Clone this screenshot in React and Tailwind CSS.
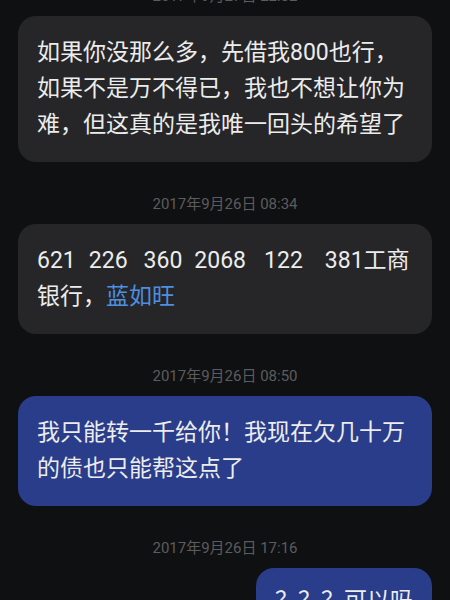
import React from 'react';

const font = { fontFamily: 'Roboto, "Noto Sans CJK SC", sans-serif' };

const Stamp = ({ children, first }) => (
  <div
    className={`h-[20px] text-center text-[15px] leading-[20px] text-[#5c5c5e] ${first ? '' : 'mt-[32px]'}`}
  >
    {children}
  </div>
);

const Bubble = ({ children, mine, className = '' }) => (
  <div
    className={`mt-[10px] rounded-[18px] px-[19px] py-[19px] text-[23px] leading-[36px] text-[#ececec] ${
      mine ? 'bg-[#293d8a]' : 'bg-[#262628]'
    } ${className}`}
  >
    {children}
  </div>
);

export default function App() {
  return (
    <div className="h-[600px] w-[450px] overflow-hidden bg-[#0f1012]" style={font}>
      <div className="-mt-[14px] flex flex-col px-[18px]">
        <Stamp first>2017年9月27日 22:32</Stamp>
        <Bubble>
          如果你没那么多，先借我800也行，
          <br />
          如果不是万不得已，我也不想让你为
          <br />
          难，但这真的是我唯一回头的希望了
        </Bubble>

        <Stamp>2017年9月26日 08:34</Stamp>
        <Bubble>
          <span className="whitespace-nowrap">
            <span>621</span>
            <span className="ml-[13px]">226</span>
            <span className="ml-[16px]">360</span>
            <span className="ml-[12px]">2068</span>
            <span className="ml-[18px]">122</span>
            <span className="ml-[22px]">381工商</span>
          </span>
          <br />
          银行，<span className="text-[#4d8fe0]">蓝如旺</span>
        </Bubble>

        <Stamp>2017年9月26日 08:50</Stamp>
        <Bubble mine>
          我只能转一千给你！我现在欠几十万
          <br />
          的债也只能帮这点了
        </Bubble>

        <Stamp>2017年9月26日 17:16</Stamp>
        <Bubble mine className="self-end pt-[15px]">
          ？？？可以吗
        </Bubble>
      </div>
    </div>
  );
}
